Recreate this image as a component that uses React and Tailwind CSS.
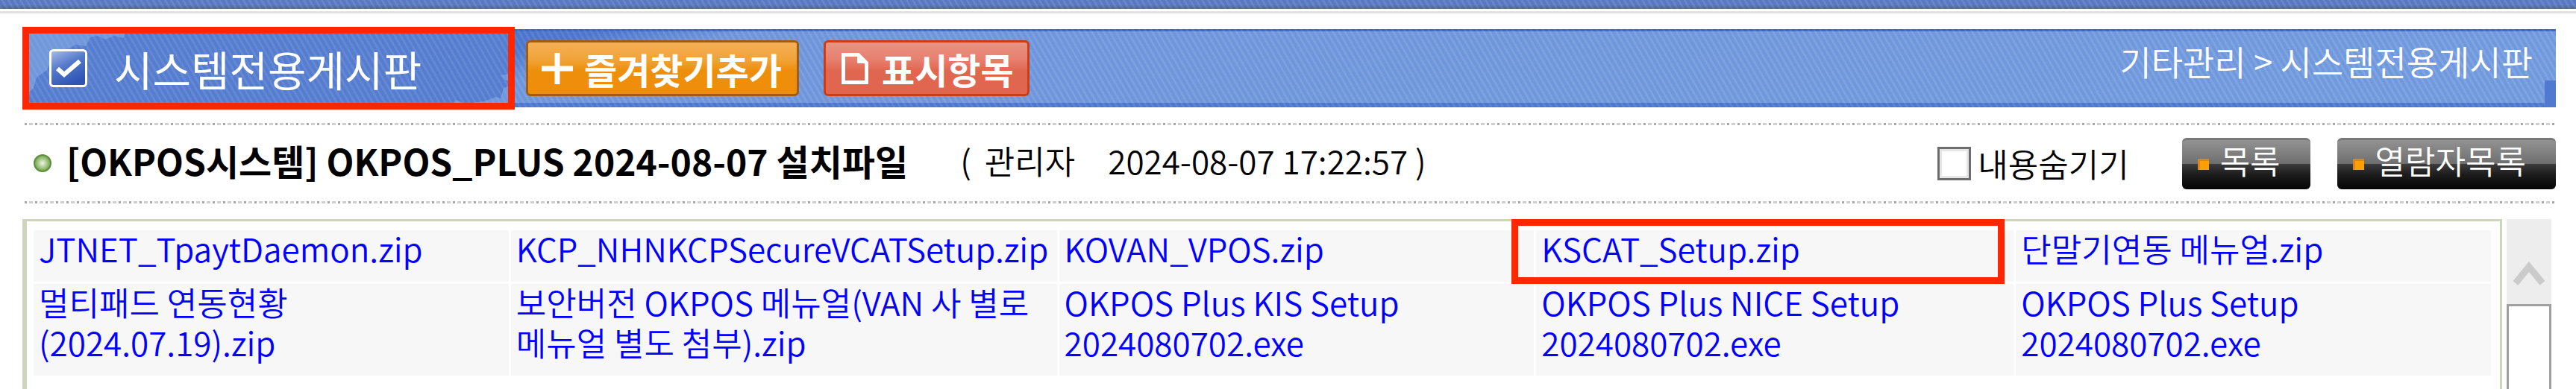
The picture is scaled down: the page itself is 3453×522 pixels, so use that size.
import React, { useState } from "react"

const files = [
  [
    { name: "JTNET_TpaytDaemon.zip" },
    { name: "KCP_NHNKCPSecureVCATSetup.zip" },
    { name: "KOVAN_VPOS.zip" },
    { name: "KSCAT_Setup.zip", marked: true },
    { name: "단말기연동 메뉴얼.zip" },
  ],
  [
    { name: "멀티패드 연동현황\n(2024.07.19).zip" },
    { name: "보안버전 OKPOS 메뉴얼(VAN 사 별로\n메뉴얼 별도 첨부).zip" },
    { name: "OKPOS Plus KIS Setup\n2024080702.exe" },
    { name: "OKPOS Plus NICE Setup\n2024080702.exe" },
    { name: "OKPOS Plus Setup\n2024080702.exe" },
  ],
]

const DottedLine = () => (
  <div className="h-[3px] bg-[repeating-linear-gradient(90deg,#a8a8a8_0_3px,#fff_3px_6px,#cfcfcf_6px_11px,#fff_11px_14px)]" />
)

const CheckIcon = () => (
  <svg className="size-[51px] shrink-0" viewBox="0 0 51 51" aria-hidden="true">
    <defs>
      <linearGradient id="check-fill" x1="0" y1="0" x2="0.5" y2="1">
        <stop offset="0" stopColor="#a9c0ea" />
        <stop offset="0.5" stopColor="#5478cb" />
        <stop offset="1" stopColor="#2f54b4" />
      </linearGradient>
    </defs>
    <rect x="1.5" y="1.5" width="48" height="48" rx="4" fill="url(#check-fill)" stroke="#fff" strokeWidth="3" />
    <path d="M11 26l9 8L41 16" fill="none" stroke="#fff" strokeWidth="6" />
  </svg>
)

const PlusIcon = () => (
  <svg className="size-[42px] shrink-0" viewBox="0 0 42 42" aria-hidden="true">
    <path d="M21 0v42M0 21h42" stroke="#fff" strokeWidth="7" />
  </svg>
)

const PageIcon = () => (
  <svg className="h-[42px] w-9 shrink-0" viewBox="0 0 36 42" aria-hidden="true">
    <path d="M2.500 2.500h20l11 11v26h-31z" fill="none" stroke="#fff" strokeWidth="5" />
    <path d="M21 0l15 14H21z" fill="#fff" />
  </svg>
)

// light patches in the corners of the title bar
const TitleClouds = () => (
  <svg className="absolute inset-0 h-full w-full" viewBox="0 0 654 105" preserveAspectRatio="none" aria-hidden="true">
    <g fill="#8db4ea" opacity="0.5">
      <path d="M0 0h138l-6 12-12-3-12 5-10-5-10 2-6 12-14-2-10 6-8 10-14 4-6 14-14 10-4 14-8 8-4 10z" />
      <path d="M654 105H570l8-10 12 5 26-3 16-6 6 2 4-14 12-4z" />
      <path d="M654 60l-16 2 6 6 10 4z" />
    </g>
  </svg>
)

const BlackButton = ({ children }) => (
  <button
    type="button"
    className="flex h-[69px] items-center gap-[15px] rounded-[6px] border-t-[3px] border-[#787878] bg-[linear-gradient(180deg,#929292_0%,#6f6f6f_48%,#3c3c3c_49%,#1c1c1c_70%,#050505_100%)] pr-[40px] pl-[21px] text-white"
  >
    <span className="size-[15px] shrink-0 border-t-[3px] border-l-[3px] border-[#dc8420] bg-[#ff9f00]" />
    <span className="pb-[12px] leading-[54px]">{children}</span>
  </button>
)

const App = () => {
  const [hidden, setHidden] = useState(false)

  return (
    <div className="flex h-screen flex-col overflow-hidden bg-white font-['Noto_Sans_CJK_KR',sans-serif] text-[44px] font-[350] whitespace-nowrap text-black">
      <div className="h-[12px] shrink-0 bg-[repeating-linear-gradient(60deg,#ffffff12_0_3px,#00000008_3px_7px),linear-gradient(180deg,#5b7cc6_0%,#5b7cc6_55%,#52678f_100%)]" />
      <div className="mt-[3px] h-[3px] shrink-0 bg-[#e1e1e1]" />

      <div className="mt-[21px] pr-[27px] pl-[33px]">
        <header className="flex h-[105px] items-center bg-[repeating-linear-gradient(60deg,#ffffff12_0_3px,#1c48b80c_3px_7px),linear-gradient(180deg,#4068c6_0_3px,#00000000_3px_99px,#4f79d2_99px),linear-gradient(168deg,#4a74cb_0px,#4f79ce_165px,#7299dd_205px,#759ddf_100%)]">
          <div className="relative flex h-full w-[654px] items-center gap-[36px] bg-[repeating-linear-gradient(60deg,#ffffff12_0_3px,#1c48b80c_3px_7px),linear-gradient(#587fd0,#587fd0)] pl-[33px] text-white">
            <TitleClouds />
            <span className="relative">
              <CheckIcon />
            </span>
            <h1 className="relative text-[56px] leading-[60px] font-normal">시스템전용게시판</h1>
            <div className="absolute -inset-[3px] border-[9px] border-[#ff2600]" />
          </div>
          <button
            type="button"
            className="ml-[18px] flex h-[75px] w-[366px] items-center gap-[15px] rounded-[6px] border-[3px] border-[#a15c0c] bg-[linear-gradient(180deg,#f4b057_0%,#f0a236_35%,#ee8f0b_55%,#ee8d08_100%)] pl-[18px] text-[48px] leading-[60px] font-bold text-white"
          >
            <PlusIcon />
            즐겨찾기추가
          </button>
          <button
            type="button"
            className="ml-[33px] flex h-[75px] w-[276px] items-center gap-[18px] rounded-[6px] border-[3px] border-[#cd3c12] bg-[linear-gradient(180deg,#ea9484_0%,#e77e6d_35%,#e06650_55%,#e0664e_100%)] pl-[21px] text-[48px] leading-[60px] font-bold text-white"
          >
            <PageIcon />
            표시항목
          </button>
          <nav className="ml-auto flex h-full items-start text-[46px] text-white">
            <span className="pt-[15px] pr-[16px] leading-[54px]">기타관리 &gt; 시스템전용게시판</span>
            <span className="h-[36px] w-[15px] self-end bg-[#5079cf]" />
          </nav>
        </header>

        <div className="mt-[21px]">
          <DottedLine />
        </div>
        <div className="flex h-[102px] items-center">
          <span className="ml-[12px] size-[24px] shrink-0 rounded-full border-[2px] border-[#5d8f3d] bg-[radial-gradient(circle,#eef6e6_0%,#a3c684_45%,#4c8426_100%)]" />
          <h2 className="ml-[20px] pb-[9px] text-[48px] font-bold">[OKPOS시스템] OKPOS_PLUS 2024-08-07 설치파일</h2>
          <p className="ml-[70px] flex pb-[9px]">
            <span>(</span>
            <span className="ml-[18px]">관리자</span>
            <span className="ml-[44px]">2024-08-07 17:22:57 )</span>
          </p>
          <div className="ml-auto flex items-center">
            <input
              id="hide"
              type="checkbox"
              checked={hidden}
              onChange={(e) => setHidden(e.target.checked)}
              className="size-[45px] appearance-none border-[3px] border-[#6d6d6d] bg-white shadow-[inset_0_0_0_3px_#e6e6e6] checked:bg-[#6d6d6d]"
            />
            <label htmlFor="hide" className="mr-[71px] ml-[9px]">
              내용숨기기
            </label>
            <BlackButton>목록</BlackButton>
            <span className="w-[36px]" />
            <BlackButton>열람자목록</BlackButton>
          </div>
        </div>
        <DottedLine />
      </div>

      <div className="mt-[21px] flex min-h-0 flex-1 pr-[33px] pl-[30px]">
        <div className="flex-1 border-t-[3px] border-r-[3px] border-l-[6px] border-[#cdd6bc] pt-[9px] pr-[9px] pl-[6px]">
          <table className="w-full table-fixed border-separate border-spacing-[3px]">
            <colgroup>
              <col className="w-[19.4%]" />
              <col className="w-[22.3%]" />
              <col className="w-[19.4%]" />
              <col className="w-[19.5%]" />
              <col />
            </colgroup>
            <tbody>
              {files.map((row, i) => (
                <tr key={i}>
                  {row.map((file) => (
                    <td key={file.name} className="relative bg-[#f7f7f7] pb-[18px] pl-[7px] align-top">
                      <a href="#" className="-mt-[3px] block leading-[54px] whitespace-pre text-[#0000ff]">
                        {file.name}
                      </a>
                      {file.marked && (
                        <div className="pointer-events-none absolute -top-[15px] right-[12px] -bottom-[3px] -left-[33px] border-[9px] border-[#ff2600]" />
                      )}
                    </td>
                  ))}
                </tr>
              ))}
            </tbody>
          </table>
        </div>
        <div className="ml-[6px] flex w-[60px] flex-col bg-[#ededed]">
          <button type="button" aria-label="위로" className="flex h-[114px] shrink-0 items-end justify-center pb-[24px]">
            <svg className="h-[33px] w-[42px]" viewBox="0 0 42 33" aria-hidden="true">
              <path d="M3 29L21 7l18 22" fill="none" stroke="#cbcbcb" strokeWidth="9" />
            </svg>
          </button>
          <div className="flex-1 border-x-[3px] border-t-[3px] border-[#9f9f9f] bg-white" />
        </div>
      </div>
    </div>
  )
}

export default App
